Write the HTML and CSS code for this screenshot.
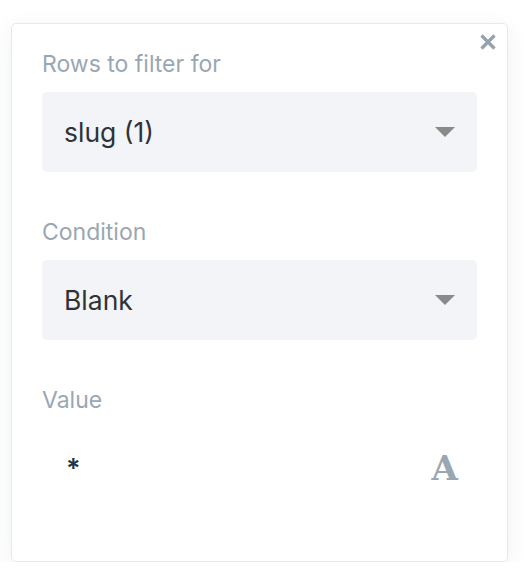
FILE: index.html
```html
<!DOCTYPE html>
<html>
<head>
<meta charset="utf-8">
<link rel="stylesheet" href="styles.css">
</head>
<body>
<div class="card">
  <button class="close" aria-label="Close">
    <svg width="18" height="16" viewBox="0 0 18 16"><path d="M2.5 1.5L15.5 14.5M15.5 1.5L2.5 14.5" stroke="#95a2ad" stroke-width="3.2" stroke-linecap="butt"/></svg>
  </button>
  <div class="field">
    <div class="label">Rows to filter for</div>
    <div class="select">
      <span class="select-text">slug (1)</span>
      <span class="caret"></span>
    </div>
  </div>
  <div class="field">
    <div class="label">Condition</div>
    <div class="select">
      <span class="select-text">Blank</span>
      <span class="caret"></span>
    </div>
  </div>
  <div class="field">
    <div class="label">Value</div>
    <div class="value-row">
      <span class="value-text">*</span>
      <span class="type-icon">A</span>
    </div>
  </div>
</div>
</body>
</html>
```
FILE: styles.css
```css
html, body {
  margin: 0;
  padding: 0;
  background: #ffffff;
}
body {
  font-family: Inter, "Noto Sans", sans-serif;
  padding: 23px 16px 0 11px;
}
.card {
  position: relative;
  box-sizing: border-box;
  width: 497px;
  height: 539px;
  border: 1px solid #e4e9ee;
  border-radius: 5px;
  background: #fff;
  box-shadow: 0 6px 24px rgba(30, 50, 80, 0.07);
  padding: 26px 30px 0 30px;
  display: flex;
  flex-direction: column;
  gap: 46px;
}
.close {
  position: absolute;
  top: 10px;
  right: 10px;
  width: 18px;
  height: 16px;
  padding: 0;
  border: 0;
  background: none;
  display: flex;
}
.field {
  display: flex;
  flex-direction: column;
  gap: 14px;
}
.label {
  font-size: 23px;
  line-height: 28px;
  color: #9aa7b2;
  font-weight: 400;
}
.select {
  height: 80px;
  background: #f3f4f8;
  border-radius: 5px;
  display: flex;
  align-items: center;
  justify-content: space-between;
  padding: 0 22px 0 22px;
}
.select-text {
  font-size: 26.5px;
  color: #2f3336;
}
.caret {
  width: 0;
  height: 0;
  border-left: 10px solid transparent;
  border-right: 10px solid transparent;
  border-top: 10px solid #8a8a8a;
}
.value-row {
  height: 80px;
  display: flex;
  align-items: center;
  justify-content: space-between;
  padding: 0 19px 0 24px;
}
.value-text {
  font-size: 27px;
  color: #243447;
  font-weight: 600;
}
.type-icon {
  font-family: "DejaVu Serif", serif;
  font-weight: 700;
  font-size: 34px;
  line-height: 34px;
  color: #9aa7b2;
}
```
